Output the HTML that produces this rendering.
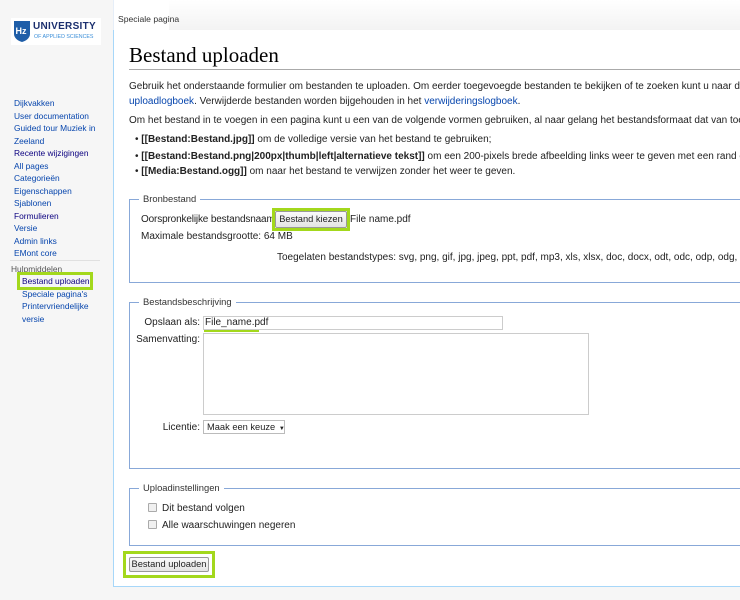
<!DOCTYPE html>
<html><head><meta charset="utf-8"><style>
*{margin:0;padding:0;box-sizing:border-box}
html,body{width:740px;height:600px;overflow:hidden}
body{background:#f6f6f6;font-family:"Liberation Sans",Arial,sans-serif;color:#222;position:relative}
#wrap{position:absolute;left:0;top:0;width:740px;height:600px;overflow:hidden}
.a{position:absolute;white-space:nowrap}
a{color:#0645ad;text-decoration:none}
.v{color:#0b0080}
.side{font-size:8.4px;line-height:12.5px}
#top{position:absolute;left:169px;top:0;width:571px;height:31px;background:linear-gradient(#fff 0%,#f3f3f3 100%);border-bottom:1px solid #a7d7f9}
#tab{position:absolute;left:113px;top:0;width:56px;height:31px;background:#fff;border-left:1px solid #e6eef8;font-size:8.6px;color:#333;padding:14px 0 0 4px;white-space:nowrap}
#content{position:absolute;left:113px;top:30px;width:627px;height:557px;background:#fff;border-left:1px solid #a7d7f9;border-bottom:1px solid #a7d7f9}
.t{font-size:10px;color:#222}
.r{position:absolute;width:100px;text-align:right;left:100px;white-space:nowrap;font-size:10px}
fieldset{position:absolute;border:1px solid #88a8d8;border-right:none}
.leg{position:absolute;background:#fff;padding:0 4px;font-size:9.4px;color:#333;white-space:nowrap}
.btn{position:absolute;background:linear-gradient(#fafafa,#e4e4e4);border:1px solid #999;border-radius:2px;font-size:9.3px;color:#222;text-align:center;white-space:nowrap}
.grn{position:absolute;border:3px solid #a3d81c}
.cb{position:absolute;width:9px;height:9px;border:1px solid #aaa;background:#f0f0f0;border-radius:1px}
</style></head><body><div id="wrap">
<div class="a" style="left:11px;top:18px;width:90px;height:27px;background:#fff"></div>
<svg class="a" style="left:13px;top:20px" width="18" height="23" viewBox="0 0 18 23"><path d="M1 1h16v13c0 4-4 7-8 8-4-1-8-4-8-8z" fill="#1f5ea8"/><text x="2.5" y="14" font-size="9" font-weight="bold" fill="#fff" font-family="Liberation Sans">Hz</text></svg>
<div class="a" style="left:33px;top:21px;font-size:10px;font-weight:bold;color:#1b2f6e;letter-spacing:0.3px">UNIVERSITY</div>
<div class="a" style="left:34px;top:34px;font-size:5.3px;color:#3a8ed8">OF APPLIED SCIENCES</div>

<div class="a side" style="left:14px;top:97px">
<a href="#">Dijkvakken</a><br><a href="#">User documentation</a><br><a href="#">Guided tour Muziek in</a><br><a href="#" style="line-height:9px;display:inline-block">Zeeland</a><br><a class="v" href="#">Recente wijzigingen</a><br><a href="#">All pages</a><br><a href="#">Categorieën</a><br><a href="#">Eigenschappen</a><br><a href="#">Sjablonen</a><br><a class="v" href="#">Formulieren</a><br><a href="#">Versie</a><br><a href="#">Admin links</a><br><a href="#">EMont core</a>
</div>
<div class="a" style="left:10px;top:260px;width:90px;height:1px;background:#e0e0e0"></div>
<div class="a side" style="left:11px;top:263px;color:#555">Hulpmiddelen</div>
<div class="grn" style="left:17px;top:272px;width:76px;height:18px"></div>
<div class="a side" style="left:22px;top:275px"><a class="v" href="#">Bestand uploaden</a><br><a href="#">Speciale pagina's</a><br><a href="#">Printervriendelijke</a><br><a href="#" style="line-height:9px;display:inline-block">versie</a></div>

<div id="top"></div>
<div id="tab">Speciale pagina</div>
<div id="content"></div>

<div class="a" style="left:129px;top:43px;font-family:'Liberation Serif',serif;font-size:21px;color:#000">Bestand uploaden</div>
<div class="a" style="left:129px;top:69px;width:611px;height:1px;background:#aaa"></div>
<div class="a t" style="left:129px;top:81px">Gebruik het onderstaande formulier om bestanden te uploaden. Om eerder toegevoegde bestanden te bekijken of te zoeken kunt u naar de <a href="#">bestandenlijst</a></div>
<div class="a t" style="left:129px;top:96px"><a href="#">uploadlogboek</a>. Verwijderde bestanden worden bijgehouden in het <a href="#">verwijderingslogboek</a>.</div>
<div class="a t" style="left:129px;top:115px">Om het bestand in te voegen in een pagina kunt u een van de volgende vormen gebruiken, al naar gelang het bestandsformaat dat van toepassing is:</div>
<div class="a t" style="left:135px;top:134px">• <b>[[Bestand:Bestand.jpg]]</b> om de volledige versie van het bestand te gebruiken;</div>
<div class="a t" style="left:135px;top:151px">• <b>[[Bestand:Bestand.png|200px|thumb|left|alternatieve tekst]]</b> om een 200-pixels brede afbeelding links weer te geven met een rand en met</div>
<div class="a t" style="left:135px;top:166px">• <b>[[Media:Bestand.ogg]]</b> om naar het bestand te verwijzen zonder het weer te geven.</div>

<fieldset style="left:129px;top:199px;width:620px;height:84px"></fieldset>
<div class="leg" style="left:139px;top:193px">Bronbestand</div>
<div class="a t" style="left:141px;top:214px;letter-spacing:-0.15px">Oorspronkelijke bestandsnaam</div>
<div class="grn" style="left:272px;top:208px;width:78px;height:23px"></div>
<div class="btn" style="left:275px;top:211px;width:72px;height:17px;padding-top:2px">Bestand kiezen</div>
<div class="a t" style="left:350px;top:214px">File name.pdf</div>
<div class="a t" style="left:141px;top:231px">Maximale bestandsgrootte: 64 MB</div>
<div class="a t" style="left:277px;top:252px">Toegelaten bestandstypes: svg, png, gif, jpg, jpeg, ppt, pdf, mp3, xls, xlsx, doc, docx, odt, odc, odp, odg, txt.</div>

<fieldset style="left:129px;top:302px;width:620px;height:167px"></fieldset>
<div class="leg" style="left:139px;top:296px">Bestandsbeschrijving</div>
<div class="r" style="top:317px">Opslaan als:</div>
<div class="a" style="left:203px;top:316px;width:300px;height:14px;border:1px solid #ccc;font-size:10px;padding:0 0 0 1px;line-height:12px">File_name.pdf</div>
<div class="a" style="left:204px;top:330px;width:55px;height:2px;background:#a3d81c"></div>
<div class="r" style="top:334px">Samenvatting:</div>
<div class="a" style="left:203px;top:333px;width:386px;height:82px;border:1px solid #ccc"></div>
<div class="r" style="top:422px">Licentie:</div>
<div class="a" style="left:203px;top:420px;width:82px;height:14px;border:1px solid #bbb;font-size:9.3px;padding-left:3px;line-height:12px;white-space:nowrap">Maak een keuze <span style="font-size:6px;margin-left:1px">▼</span></div>

<fieldset style="left:129px;top:488px;width:620px;height:58px"></fieldset>
<div class="leg" style="left:139px;top:482px">Uploadinstellingen</div>
<div class="cb" style="left:148px;top:503px"></div>
<div class="a t" style="left:162px;top:503px">Dit bestand volgen</div>
<div class="cb" style="left:148px;top:520px"></div>
<div class="a t" style="left:162px;top:520px">Alle waarschuwingen negeren</div>

<div class="grn" style="left:123px;top:551px;width:92px;height:27px"></div>
<div class="btn" style="left:129px;top:557px;width:80px;height:15px;padding-top:1px">Bestand uploaden</div>
</div></body></html>
